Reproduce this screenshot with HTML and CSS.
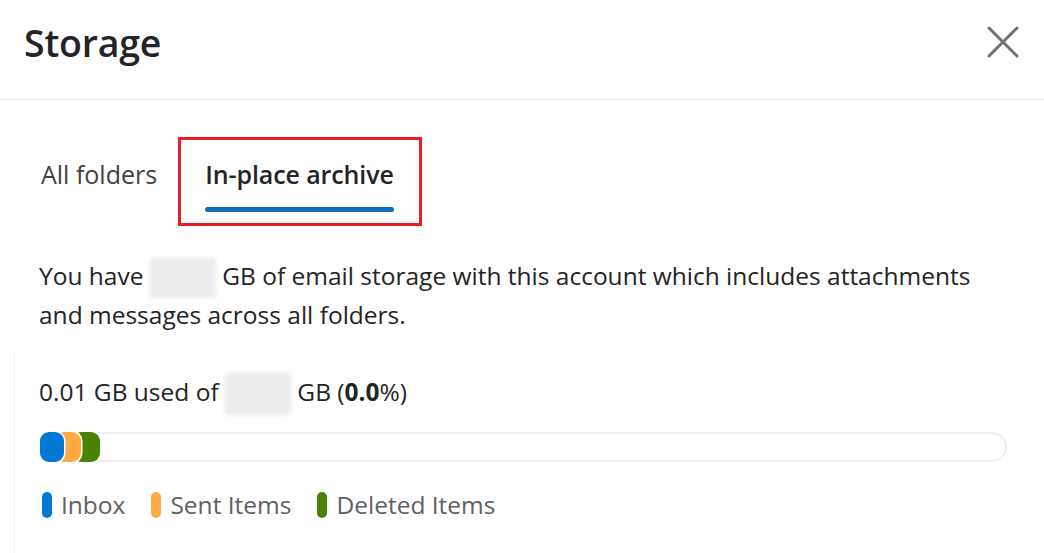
FILE: index.html
```html
<!DOCTYPE html>
<html lang="en">
<head>
<meta charset="utf-8">
<title>Storage</title>
<link rel="stylesheet" href="styles.css">
</head>
<body>
<div class="dialog">
  <header class="header">
    <h1 class="title">Storage</h1>
    <button class="close" aria-label="Close">
      <svg width="32" height="32" viewBox="0 0 32 32"><path d="M2 2 L30 30 M30 2 L2 30" stroke="#707070" stroke-width="3" stroke-linecap="round" fill="none"/></svg>
    </button>
  </header>
  <main class="body">
    <div class="tabs">
      <div class="tab">All folders</div>
      <div class="highlight">
        <div class="tab tab-active">In-place archive<span class="tab-bar"></span></div>
      </div>
    </div>
    <p class="intro">You have <span class="blur"></span> GB of email storage with this account which includes attachments and messages across all folders.</p>
    <section class="card">
      <p class="used">0.01 GB used of <span class="blur blur-tall"></span> GB (<b>0.0</b>%)</p>
      <div class="track">
        <span class="seg seg-inbox"></span>
        <span class="seg seg-sent"></span>
        <span class="seg seg-deleted"></span>
      </div>
      <ul class="legend">
        <li class="legend-item"><span class="pill pill-inbox"></span>Inbox</li>
        <li class="legend-item"><span class="pill pill-sent"></span>Sent Items</li>
        <li class="legend-item"><span class="pill pill-deleted"></span>Deleted Items</li>
      </ul>
    </section>
  </main>
</div>
</body>
</html>
```

FILE: styles.css
```css
* { box-sizing: border-box; }
html, body { margin: 0; padding: 0; background: #fff; }
body {
  font-family: "Open Sans", "Noto Sans", "Liberation Sans", sans-serif;
  color: #242424;
  width: 1044px;
  height: 553px;
  overflow: hidden;
}
.dialog {
  height: 553px;
  display: flex;
  flex-direction: column;
  overflow: hidden;
}
.header {
  flex: none;
  height: 100px;
  border-bottom: 1px solid #ebebeb;
  display: flex;
  align-items: center;
  justify-content: space-between;
  padding: 0 25px 0 24px;
}
.title {
  margin: 0;
  font-size: 37.5px;
  font-weight: 600;
  letter-spacing: -0.2px;
  margin-top: -14px;
}
.close {
  border: 0;
  background: none;
  padding: 0;
  width: 32px;
  height: 32px;
  margin-top: -16px;
}
.close svg { display: block; }
.body {
  flex: 1;
  display: flex;
  flex-direction: column;
  padding: 37px 0 0 0;
  min-height: 0;
}
.tabs {
  display: flex;
  align-items: flex-start;
  padding-left: 29px;
}
.tab {
  font-size: 25px;
  color: #424242;
  padding: 0 12px;
  line-height: 32px;
  margin-top: 21px;
}
.highlight {
  margin-left: 9px;
  border: 3px solid #e81d25;
  width: 244px;
  height: 89px;
  padding: 0 0 0 12px;
}
.tab-active {
  display: inline-block;
  font-weight: 600;
  color: #242424;
  letter-spacing: -0.1px;
  margin-top: 18px;
}
.tab-bar {
  display: block;
  height: 5px;
  border-radius: 3px;
  background: #0f6cbd;
  margin-top: 17px;
}
.intro {
  margin: 30px 0 0 39px;
  width: 960px;
  font-size: 24.5px;
  line-height: 39px;
}
.blur {
  display: inline-block;
  width: 66px;
  height: 40px;
  vertical-align: middle;
  background: #ececec;
  filter: blur(2px);
  margin: -8px 0;
}
.blur-tall { height: 42px; }
.card {
  flex: 1;
  margin: 18px 0 0 14px;
  border-left: 1px solid #fbeef0;
  padding: 19px 0 0 24px;
}
.used {
  margin: 0;
  font-size: 24.5px;
  line-height: 42px;
}
.used b { font-weight: 700; }
.track {
  margin-top: 19px;
  width: 968px;
  height: 30px;
  border: 2px solid #efefef;
  border-radius: 15px;
  display: flex;
  align-items: center;
}
.seg {
  display: block;
  height: 30px;
  border-radius: 9px;
  box-shadow: 0 0 0 1.5px #fff;
  position: relative;
}
.seg-inbox { width: 24px; background: #0078d4; z-index: 3; margin-left: -1px; }
.seg-sent { width: 26px; background: #ffaa44; z-index: 2; margin-left: -9px; }
.seg-deleted { width: 28px; background: #498205; z-index: 1; margin-left: -9px; }
.legend {
  list-style: none;
  margin: 28px 0 0 3px;
  padding: 0;
  display: flex;
  gap: 26px;
}
.legend-item {
  display: flex;
  align-items: center;
  font-size: 24.5px;
  color: #616161;
  line-height: 30px;
}
.pill {
  display: inline-block;
  width: 10px;
  height: 26px;
  border-radius: 5px;
  margin-right: 9px;
}
.pill-inbox { background: #0078d4; }
.pill-sent { background: #ffaa44; }
.pill-deleted { background: #498205; }
```
